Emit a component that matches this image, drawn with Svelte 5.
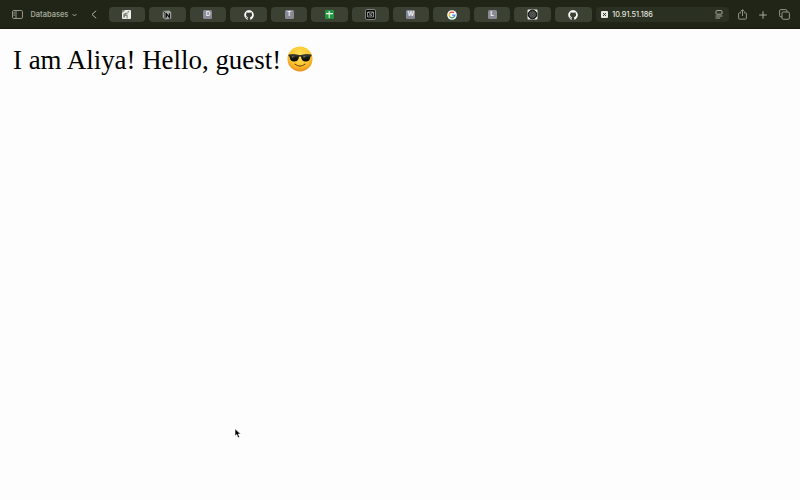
<script>
  const tabs = ['news', 'notion', 'D', 'github', 'T', 'sheets', 'mail', 'W', 'google', 'L', 'target', 'github'];
</script>

<div class="browser">
  <header>
    <svg class="sidebar" width="11" height="9" viewBox="0 0 11 9" fill="none" stroke="#a0a493" stroke-width=".9">
      <rect x=".5" y=".5" width="10" height="8" rx="1.3" />
      <path d="M4 .5v8M1.5 2.3h1.3M1.5 3.8h1.3M1.5 5.3h1.3" />
    </svg>
    <span class="group">Databases</span>
    <svg class="down" width="5" height="4" viewBox="0 0 5 4" fill="none" stroke="#a0a493"><path d="m.5 1 2 2 2-2" /></svg>
    <svg class="back" width="6" height="9" viewBox="0 0 6 9" fill="none" stroke="#b0b3a6"><path d="M5.2.7 1 4.5l4.2 3.8" /></svg>

    <nav>
      {#each tabs as tab}
        <div class="tab">
          {#if tab.length === 1}
            <span class="letter">{tab}</span>
          {:else if tab === 'news'}
            <svg width="9" height="9" viewBox="0 0 9 9">
              <rect width="9" height="9" rx="1" fill="#eeeeea" />
              <path d="M0 0h3.4L1 2.5H0zM1.3 4.1l2-1.4h3.2l-1 1H4.3v1.1h1.4v3.6H4.5V5.9H3v1.6H1.3z" fill="#82867b" />
              <path d="M5.6 1.8h1.5" stroke="#62665a" />
            </svg>
          {:else if tab === 'notion'}
            <svg width="10" height="10" viewBox="0 0 10 10">
              <path d="M1 1.3 7.1.7 9 2.2v6.4L2.8 9.2 1 7.4z" fill="#aaa" stroke="#888b84" stroke-width=".6" />
              <path d="M1.4 1.7 3 3v5.6" fill="none" stroke="#111" stroke-width=".9" />
              <path d="M4.4 7.5V3.7l3 3.7V3.3" fill="none" stroke="#080808" stroke-width="1.1" />
            </svg>
          {:else if tab === 'github'}
            <svg width="10" height="10" viewBox="0 0 16 16" fill="#fff"><path d="M8 .5C3.7.5.4 3.9.4 8.1c0 3.4 2.2 6.3 5.2 7.3.4.1.5-.2.5-.4v-1.6c-2.1.5-2.6-.9-2.6-.9-.3-.9-.8-1.1-.8-1.1-.7-.5.1-.5.1-.5.8.1 1.2.8 1.2.8.7 1.2 1.8.9 2.2.7.1-.5.3-.9.5-1.1-1.7-.2-3.5-.9-3.5-3.8 0-.8.3-1.5.8-2-.1-.2-.3-1 .1-2 0 0 .6-.2 2.1.8a7 7 0 0 1 3.8 0c1.4-1 2.1-.8 2.1-.8.4 1 .2 1.8.1 2 .5.5.8 1.2.8 2 0 2.9-1.8 3.600-3.500 3.800.3.2.5.7.5 1.400V15c0 .2.1.5.5.4 3.100-1 5.200-3.900 5.200-7.300C15.700 3.900 12.300.5 8 .5" /></svg>
          {:else if tab === 'sheets'}
            <svg width="9" height="9" viewBox="0 0 9 9">
              <rect width="9" height="9" rx="1" fill="#20943f" />
              <path d="M1 3.600h7M4.200 1v7" stroke="#e8f6e9" stroke-width="1.100" />
            </svg>
          {:else if tab === 'mail'}
            <svg width="11" height="11" viewBox="0 0 11 11" fill="none">
              <rect x=".5" y=".5" width="10" height="10" rx="1.400" fill="#050505" stroke="#8c8f88" stroke-width=".9" />
              <path d="M2.500 3h6v5h-6zM3 3l2.500 2L8 3M3.600 6.500l1.500-1 1.900 1.400M7.300 5.400 5.300 7" stroke="#bbbcb9" stroke-width=".75" />
            </svg>
          {:else if tab === 'google'}
            <svg width="10" height="10" viewBox="0 0 10 10" fill="none">
              <circle cx="5" cy="5" r="4.800" fill="#fff" />
              <g stroke-width="1.300">
                <path d="M7 2.900A2.900 2.900 0 0 0 2.500 3.500" stroke="#ea4335" />
                <path d="M2.500 3.500a2.900 2.900 0 0 0 0 3" stroke="#fbbc05" />
                <path d="M2.500 6.500a2.900 2.900 0 0 0 4.400.6" stroke="#34a853" />
                <path d="M6.900 7.100A2.900 2.900 0 0 0 7.900 5.200H5.100" stroke="#4285f4" />
              </g>
            </svg>
          {:else}
            <svg width="11" height="11" viewBox="0 0 11 11" fill="none">
              <rect x=".5" y=".5" width="10" height="10" rx="1" fill="#e8e8e5" />
              <circle cx="5.500" cy="5.500" r="4.300" fill="#333532" stroke="#080908" />
              <circle cx="5.500" cy="5.500" r="2.700" stroke="#767974" stroke-width=".7" />
              <circle cx="5.500" cy="5.500" r="1.100" stroke="#8c8e8a" stroke-width=".6" />
            </svg>
          {/if}
        </div>
      {/each}
    </nav>

    <div class="address">
      <svg width="7" height="7" viewBox="0 0 7 7"><rect width="7" height="7" rx="1" fill="#e7e8e2" /><path d="m2.100 2.200 2.800 2.600m0-2.600L2.100 4.800" stroke="#202517" /></svg>
      <span>10.91.51.186</span>
      <svg class="reader" width="8" height="9" viewBox="0 0 8 9" fill="none" stroke="#b2b5aa" stroke-width=".9"><rect x="1" y=".6" width="6" height="3.600" rx=".8" /><path d="M.5 6h7M.5 8h4.700" /></svg>
    </div>

    <svg class="share" width="9" height="11" viewBox="0 0 9 11" fill="none" stroke="#a0a493" stroke-width=".9"><path d="M3 3.800H1.400q-.8 0-.8.8v4.700q0 .8.8.8h6.200q.8 0 .8-.8V4.600q0-.8-.8-.8H6M4.500 7V.8M2.600 2.600 4.500.7l1.900 1.900" /></svg>
    <svg class="plus" width="8" height="8" viewBox="0 0 8 8" stroke="#a8ab9f"><path d="M4 .2v7.600M.2 4h7.600" /></svg>
    <svg class="copies" width="11" height="11" viewBox="0 0 11 11" fill="none" stroke="#a0a493" stroke-width=".9"><rect x="3" y="3" width="7.400" height="7.300" rx="1.300" /><path d="M3 7.800H1.800Q.6 7.800.6 6.600V1.800Q.6.6 1.800.6h4.900q1.200 0 1.200 1.200V3" /></svg>
  </header>

  <main>
    <p>I am Aliya! Hello, guest!</p>
    <svg class="cool" width="26" height="26" viewBox="0 0 26 26" role="img" aria-label="Smiling face with sunglasses">
      <defs>
        <radialGradient id="skin" cx=".5" cy=".35" r=".67">
          <stop stop-color="#ffe45b" /><stop offset=".65" stop-color="#fdc42e" /><stop offset="1" stop-color="#e88718" />
        </radialGradient>
        <linearGradient id="lens" x2="0" y2="1"><stop stop-color="#454536" /><stop offset=".5" stop-color="#181812" /><stop offset="1" stop-color="#080806" /></linearGradient>
      </defs>
      <circle cx="13" cy="13" r="12.500" fill="url(#skin)" />
      <path d="M1.500 8.500q5.500-1 9.500.3 2 .5 4 0 4-1.300 9.500-.3l.1 1.600-1.200.6c-.4 3.300-1.800 4.800-4.600 4.800-3.200 0-4.300-1.800-4.800-4.700q-1-.8-2 0c-.5 2.900-1.600 4.700-4.800 4.700-2.800 0-4.200-1.500-4.600-4.800l-1.200-.6z" fill="url(#lens)" />
      <path d="m4.500 9.900 3.800-.2-3.200 2.600zm11.500 0 3.800-.2-3.200 2.600z" fill="#77776a" opacity=".7" />
      <path d="M7.900 18.100q5.300 4 10.200 0" fill="none" stroke="#74410e" stroke-width="1.100" stroke-linecap="round" />
    </svg>
    <svg class="cursor" width="8" height="11" viewBox="0 0 8 11"><path d="M1 .8v7.300l1.700-1.600 1.400 3.200 1.500-.7-1.400-3h2.500z" fill="#000" stroke="#fff" stroke-width=".6" /></svg>
  </main>
</div>

<style>
  :global(body) { margin: 0; overflow: hidden; }
  .browser { width: 800px; height: 500px; background: #fdfdfd; position: relative; }
  svg { display: block; flex: none; }
  header { box-sizing: border-box; height: 29px; padding-left: 11.500px; display: flex; align-items: center; background: #202518; box-shadow: inset 0 -1px #1b180f; font-family: Inter, "Liberation Sans", sans-serif; }
  .group { width: 39px; margin-left: 8px; color: #a0a493; font-size: 7.400px; font-weight: 600; line-height: 10px; white-space: nowrap; }
  .down { margin-left: 2px; }
  .back { margin-left: 14.500px; }
  nav { display: flex; gap: 4px; margin-left: 11.500px; }
  .tab { width: 36.600px; height: 15px; border-radius: 4px; display: flex; align-items: center; justify-content: center; background: #3c4233; }
  .letter { width: 9px; height: 9px; border-radius: 1.500px; background: #888995; color: #f0f0f2; font-size: 6.500px; font-weight: 700; line-height: 9px; text-align: center; }
  .address { box-sizing: border-box; width: 133px; height: 15px; margin-left: 4px; padding: 0 6px 0 5px; border-radius: 4px; display: flex; align-items: center; background: #2a3022; color: #e4e5de; font-size: 7.300px; font-weight: 500; }
  .address span { margin-left: 4.500px; white-space: nowrap; }
  .reader { margin-left: auto; }
  .share { margin-left: 9.500px; }
  .plus { margin-left: 12px; }
  .copies { margin-left: 12px; }
  main { display: flex; align-items: flex-start; padding: 16px 0 0 13px; }
  p { margin: 0; color: #000; font: 26.900px/31px "Liberation Serif", serif; white-space: nowrap; }
  .cool { margin: 1px 0 0 6px; }
  .cursor { position: absolute; left: 234px; top: 428px; }
</style>
